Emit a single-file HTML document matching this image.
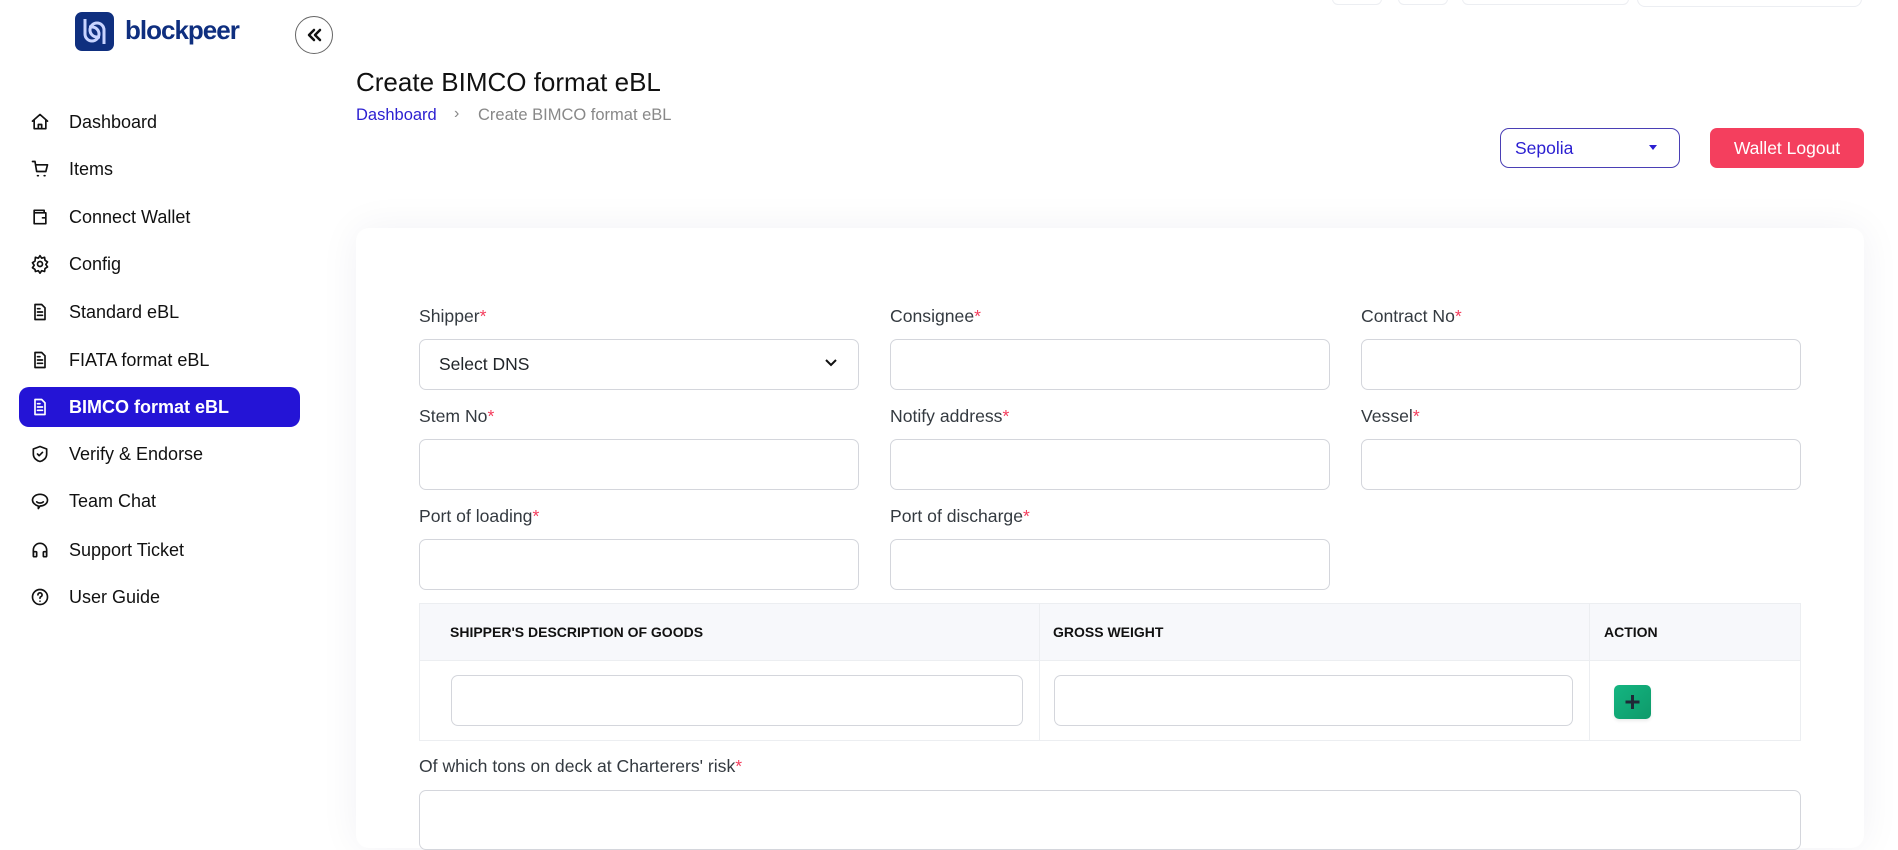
<!DOCTYPE html>
<html><head><meta charset="utf-8">
<style>
*{box-sizing:border-box;margin:0;padding:0}
body{width:1898px;height:817px;overflow:hidden;background:#fff;font-family:"Liberation Sans",sans-serif;color:#212529;position:relative}
.abs{position:absolute}
.nav{position:absolute;left:19px;width:281px;height:40px;display:flex;align-items:center;font-size:18px;color:#111;}
.nav svg{position:absolute;left:11px;width:20px;height:20px;fill:none;stroke:#111;stroke-width:2;stroke-linecap:round;stroke-linejoin:round}
.nav span{position:absolute;left:50px}
.nav.act{background:#2414d6;color:#fff;border-radius:10px;font-weight:700}
.nav.act svg{stroke:#fff}
.lbl{position:absolute;font-size:17.6px;color:#343a40}
.lbl i{color:#f43f5e;font-style:normal}
.inp{position:absolute;height:51px;border:1px solid #d4d6dc;border-radius:7px;background:#fff}
.th{position:absolute;font-size:14px;font-weight:700;color:#111;top:624px}
</style></head><body>
<div class="abs" style="left:1332px;top:-10px;width:50px;height:15px;border:1px solid #eceef2;border-radius:6px"></div>
<div class="abs" style="left:1398px;top:-10px;width:50px;height:15px;border:1px solid #eceef2;border-radius:6px"></div>
<div class="abs" style="left:1462px;top:-10px;width:167px;height:15px;border:1px solid #eceef2;border-radius:6px"></div>
<div class="abs" style="left:1637px;top:-10px;width:225px;height:17px;border:1px solid #eceef2;border-radius:8px"></div>

<div class="abs" style="left:75px;top:12px;width:39px;height:39px;background:#0f2f7f;border-radius:7px">
<svg width="39" height="39" viewBox="0 0 39 39" fill="none" stroke="#c9d4ff" stroke-width="3"><path d="M10 7v15a7 7 0 1 0 7-7h-3"/><path d="M29 32V18a7 7 0 1 0-7 7h3"/></svg></div>
<div class="abs" style="left:125px;top:15px;font-size:26px;font-weight:700;color:#0f2f7f;letter-spacing:-1px">blockpeer</div>
<div class="abs" style="left:295px;top:16px;width:38px;height:38px;border:1.5px solid #666;border-radius:50%;display:flex;align-items:center;justify-content:center">
<svg width="16" height="14" viewBox="0 0 16 14" fill="none" stroke="#111" stroke-width="2.5" stroke-linecap="round" stroke-linejoin="round"><path d="M8 2 3 7l5 5M14 2 9 7l5 5"/></svg></div>

<div class="nav" style="top:102px"><svg viewBox="0 0 24 24"><path d="M3 11 12 3l9 8M5 10v10h14V10M10 20v-5h4v5"/></svg><span>Dashboard</span></div>
<div class="nav" style="top:149px"><svg viewBox="0 0 24 24"><path d="M3 3h3l2 12h11l2-8H7M9 20h1M17 20h1"/></svg><span>Items</span></div>
<div class="nav" style="top:197px"><svg viewBox="0 0 24 24"><path d="M17 7V4H5v16h14V7H5M15 13h3"/></svg><span>Connect Wallet</span></div>
<div class="nav" style="top:244px"><svg viewBox="0 0 24 24"><circle cx="12" cy="12" r="3"/><path d="M12 2l2 3 3.5-1 .5 3.5 3 2-2 3 2 3-3 2-.5 3.5-3.5-1-2 3-2-3-3.5 1L6 18.5l-3-2 2-3-2-3 3-2L6.5 4 10 5z"/></svg><span>Config</span></div>
<div class="nav" style="top:292px"><svg viewBox="0 0 24 24"><path d="M6 3h8l4 4v14H6zM9 12h6M9 16h6M9 8h3"/></svg><span>Standard eBL</span></div>
<div class="nav" style="top:340px"><svg viewBox="0 0 24 24"><path d="M6 3h8l4 4v14H6zM9 12h6M9 16h6M9 8h3"/></svg><span>FIATA format eBL</span></div>
<div class="nav act" style="top:387px"><svg viewBox="0 0 24 24"><path d="M6 3h8l4 4v14H6zM9 12h6M9 16h6M9 8h3"/></svg><span>BIMCO format eBL</span></div>
<div class="nav" style="top:434px"><svg viewBox="0 0 24 24"><path d="M12 3l8 3v6c0 5-4 8-8 9-4-1-8-4-8-9V6z"/><path d="M9 12l2 2 4-4"/></svg><span>Verify &amp; Endorse</span></div>
<div class="nav" style="top:481px"><svg viewBox="0 0 24 24"><path d="M12 4c5 0 9 3 9 7s-4 7-9 7l-2 3v-3c-4-1-7-4-7-7 0-4 4-7 9-7z"/><path d="M8 13c2 2 6 2 8 0"/></svg><span>Team Chat</span></div>
<div class="nav" style="top:530px"><svg viewBox="0 0 24 24"><path d="M4 18v-6a8 8 0 0 1 16 0v6"/><rect x="4" y="14" width="4" height="6" rx="1"/><rect x="16" y="14" width="4" height="6" rx="1"/></svg><span>Support Ticket</span></div>
<div class="nav" style="top:577px"><svg viewBox="0 0 24 24"><circle cx="12" cy="12" r="9"/><path d="M9.5 9.5a2.5 2.5 0 1 1 3 2.4c-.5.2-.5.6-.5 1.6M12 17h.01"/></svg><span>User Guide</span></div>

<div class="abs" style="left:356px;top:67px;font-size:26px;color:#111">Create BIMCO format eBL</div>
<div class="abs" style="left:356px;top:106px;font-size:16.5px;color:#2b1fd1">Dashboard</div>
<div class="abs" style="left:454px;top:105px;font-size:16px;color:#888">›</div>
<div class="abs" style="left:478px;top:106px;font-size:16.5px;color:#888">Create BIMCO format eBL</div>

<div class="abs" style="left:1500px;top:128px;width:180px;height:40px;border:1.5px solid #4a3fb5;border-radius:9px"></div>
<div class="abs" style="left:1515px;top:138px;font-size:17.5px;color:#2b1fd1">Sepolia</div>
<div class="abs" style="left:1649px;top:145px;width:0;height:0;border-left:4px solid transparent;border-right:4px solid transparent;border-top:5px solid #2b1fd1"></div>
<div class="abs" style="left:1710px;top:128px;width:154px;height:40px;background:#f43f5e;border-radius:7px;color:#fff;font-size:17.5px;display:flex;align-items:center;justify-content:center">Wallet Logout</div>

<div class="abs" style="left:356px;top:228px;width:1508px;height:620px;background:#fff;border-radius:13px;box-shadow:0 0 40px rgba(30,40,80,0.06)"></div>

<div class="lbl" style="left:419px;top:306px">Shipper<i>*</i></div>
<div class="lbl" style="left:890px;top:306px">Consignee<i>*</i></div>
<div class="lbl" style="left:1361px;top:306px">Contract No<i>*</i></div>
<div class="inp" style="left:419px;top:339px;width:440px"></div>
<div class="abs" style="left:439px;top:354px;font-size:17.5px;color:#212529">Select DNS</div>
<svg class="abs" style="left:824px;top:358px" width="14" height="10" viewBox="0 0 14 10" fill="none" stroke="#111" stroke-width="2"><path d="M2 2l5 5 5-5"/></svg>
<div class="inp" style="left:890px;top:339px;width:440px"></div>
<div class="inp" style="left:1361px;top:339px;width:440px"></div>

<div class="lbl" style="left:419px;top:406px">Stem No<i>*</i></div>
<div class="lbl" style="left:890px;top:406px">Notify address<i>*</i></div>
<div class="lbl" style="left:1361px;top:406px">Vessel<i>*</i></div>
<div class="inp" style="left:419px;top:439px;width:440px"></div>
<div class="inp" style="left:890px;top:439px;width:440px"></div>
<div class="inp" style="left:1361px;top:439px;width:440px"></div>

<div class="lbl" style="left:419px;top:506px">Port of loading<i>*</i></div>
<div class="lbl" style="left:890px;top:506px">Port of discharge<i>*</i></div>
<div class="inp" style="left:419px;top:539px;width:440px"></div>
<div class="inp" style="left:890px;top:539px;width:440px"></div>

<div class="abs" style="left:419px;top:603px;width:1382px;height:138px;border:1px solid #eceef1"></div>
<div class="abs" style="left:420px;top:604px;width:1380px;height:57px;background:#f7f8fb;border-bottom:1px solid #eceef1"></div>
<div class="abs" style="left:1039px;top:604px;width:1px;height:136px;background:#eceef1"></div>
<div class="abs" style="left:1589px;top:604px;width:1px;height:136px;background:#eceef1"></div>
<div class="th" style="left:450px">SHIPPER'S DESCRIPTION OF GOODS</div>
<div class="th" style="left:1053px">GROSS WEIGHT</div>
<div class="th" style="left:1604px">ACTION</div>
<div class="inp" style="left:451px;top:675px;width:572px"></div>
<div class="inp" style="left:1054px;top:675px;width:519px"></div>
<div class="abs" style="left:1614px;top:685px;width:37px;height:34px;background:linear-gradient(135deg,#14b581,#0e9a6a);border-radius:5px;box-shadow:0 2px 3px rgba(0,0,0,.08)">
<svg width="37" height="34" viewBox="0 0 37 34" stroke="#1f2937" stroke-width="3"><path d="M18.5 10v14M11.5 17h14"/></svg></div>

<div class="lbl" style="left:419px;top:756px">Of which tons on deck at Charterers' risk<i>*</i></div>
<div class="inp" style="left:419px;top:790px;width:1382px;height:60px"></div>
</body></html>
